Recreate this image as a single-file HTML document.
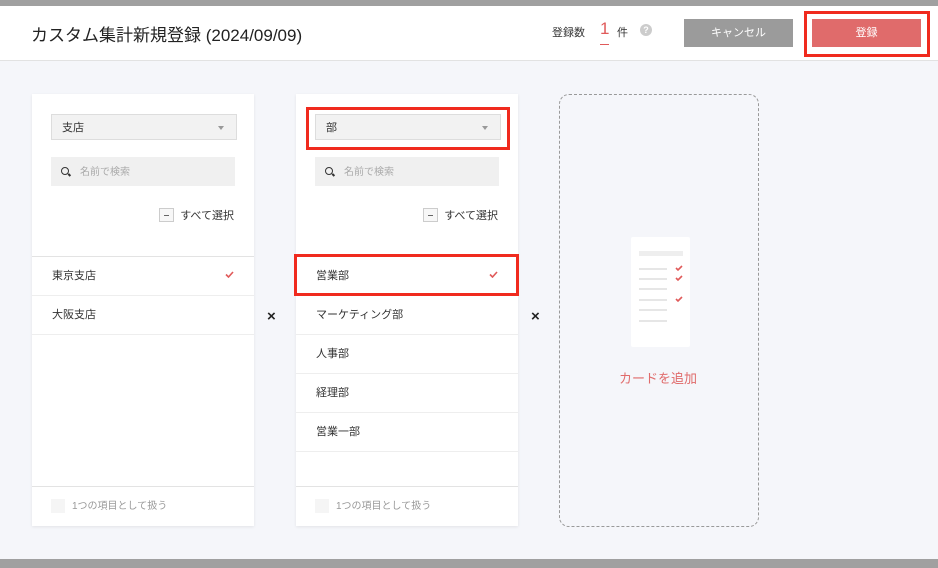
<!DOCTYPE html>
<html><head><meta charset="utf-8"><style>
*{box-sizing:border-box;margin:0;padding:0}
html,body{width:938px;height:568px;overflow:hidden}
body{background:#f5f6fa;font-family:"Liberation Sans","Noto Sans CJK JP",sans-serif;position:relative;color:#333}
.a{position:absolute}
.card{position:absolute;top:94px;width:222px;height:432px;background:#fff;box-shadow:0 1px 3px rgba(0,0,0,.08)}
.dd{position:absolute;left:19px;top:20px;width:186px;height:26px;background:#f2f2f2;border:1px solid #ddd;font-size:11px;padding:4px 10px;color:#333}
.dd:after{content:"";position:absolute;right:12px;top:11px;border:3px solid transparent;border-top:4px solid #999}
.sr{position:absolute;left:19px;top:63px;width:184px;height:29px;background:#f0f0f0;font-size:10px;color:#aaa;padding:6px 0 0 29px}
.sr i{position:absolute;left:10px;top:10px;width:8px;height:8px;border:1.5px solid #333;border-radius:50%}
.sr i:after{content:"";position:absolute;left:6px;top:6px;width:3px;height:1.5px;background:#333;transform:rotate(45deg)}
.sa{position:absolute;right:20px;top:113px;font-size:11px;color:#333}
.sa b{display:inline-block;width:15px;height:14px;border:1px solid #ccc;background:#f7f7f7;vertical-align:middle;margin-right:6px;position:relative;top:-1px}
.sa b:after{content:"";position:absolute;left:4px;top:6px;width:5px;height:1px;background:#666}
.list{position:absolute;left:0;right:0;top:162px;border-top:1px solid #e3e3e3}
.it{height:39px;border-bottom:1px solid #eee;font-size:11px;padding:10px 0 0 20px;position:relative}
.ck{position:absolute;right:20px;top:14px}
.ft{position:absolute;left:0;right:0;bottom:0;height:40px;border-top:1px solid #e3e3e3;font-size:10px;color:#999;padding:10px 0 0 40px}
.ft b{position:absolute;left:19px;top:12px;width:14px;height:14px;background:#f5f5f5}
.x{position:absolute;top:308px;font-size:15px;font-weight:bold;color:#222}
.hl{position:absolute;border:3px solid #f02a1e}
</style></head><body>
<div class="a" style="left:0;top:0;width:938px;height:6px;background:#a0a0a0"></div>
<div class="a" style="left:0;top:6px;width:938px;height:55px;background:#fff;border-bottom:1px solid #e2e2e2"></div>
<div class="a" style="left:31px;top:21px;font-size:17px;color:#222">カスタム集計新規登録 (2024/09/09)</div>
<div class="a" style="left:552px;top:24px;font-size:11px">登録数</div>
<div class="a" style="left:600px;top:19px;font-size:17px;color:#e05a5a">1</div>
<div class="a" style="left:600px;top:44px;width:9px;height:1px;background:#e05a5a"></div>
<div class="a" style="left:617px;top:24px;font-size:11px">件</div>
<div class="a" style="left:640px;top:24px;width:12px;height:12px;border-radius:50%;background:#ccc;color:#fff;font-size:9px;text-align:center;line-height:12px;font-weight:bold">?</div>
<div class="a" style="left:684px;top:19px;width:109px;height:28px;background:#9b9b9b;color:#fff;font-size:11px;text-align:center;line-height:29px">キャンセル</div>
<div class="a" style="left:812px;top:19px;width:109px;height:28px;background:#e06b6b;color:#fff;font-size:11px;text-align:center;line-height:29px">登録</div>
<div class="hl" style="left:804px;top:11px;width:126px;height:46px"></div>

<div class="card" style="left:32px">
<div class="dd">支店</div>
<div class="sr"><i></i>名前で検索</div>
<div class="sa"><b></b>すべて選択</div>
<div class="list"><div class="it">東京支店<svg class="ck" width="9" height="7"><path d="M1 3.5l2.5 2.5 4.5-5" stroke="#e05a5a" stroke-width="1.6" fill="none"/></svg></div><div class="it">大阪支店</div></div>
<div class="ft"><b></b>1つの項目として扱う</div>
</div>
<div class="x" style="left:267px">×</div>
<div class="card" style="left:296px">
<div class="dd">部</div>
<div class="sr"><i></i>名前で検索</div>
<div class="sa"><b></b>すべて選択</div>
<div class="list"><div class="it">営業部<svg class="ck" width="9" height="7"><path d="M1 3.5l2.5 2.5 4.5-5" stroke="#e05a5a" stroke-width="1.6" fill="none"/></svg></div><div class="it">マーケティング部</div><div class="it">人事部</div><div class="it">経理部</div><div class="it">営業一部</div></div>
<div class="ft"><b></b>1つの項目として扱う</div>
</div>
<div class="hl" style="left:306px;top:107px;width:204px;height:43px"></div>
<div class="hl" style="left:294px;top:254px;width:225px;height:42px"></div>
<div class="x" style="left:531px">×</div>

<div class="a" style="left:559px;top:94px;width:200px;height:433px;border:1px dashed #999;border-radius:10px"></div>
<div class="a" style="left:631px;top:237px;width:59px;height:110px;background:#fff;border-radius:2px">
<div class="a" style="left:8px;top:14px;width:44px;height:5px;background:#eee"></div>
<svg class="a" style="left:0;top:0" width="59" height="110"><g stroke="#ddd" stroke-width="1.5"><line x1="8" y1="32" x2="36" y2="32"/><line x1="8" y1="42" x2="36" y2="42"/><line x1="8" y1="52" x2="36" y2="52"/><line x1="8" y1="63" x2="36" y2="63"/><line x1="8" y1="73" x2="36" y2="73"/><line x1="8" y1="84" x2="36" y2="84"/></g><g stroke="#e05a5a" stroke-width="1.6" fill="none"><path d="M45 31l2 2 4-4"/><path d="M45 41l2 2 4-4"/><path d="M45 62l2 2 4-4"/></g></svg>
</div>
<div class="a" style="left:619px;top:368px;font-size:13px;color:#e06b6b">カードを追加</div>

<div class="a" style="left:0;top:559px;width:938px;height:9px;background:#a0a0a0"></div>
</body></html>
